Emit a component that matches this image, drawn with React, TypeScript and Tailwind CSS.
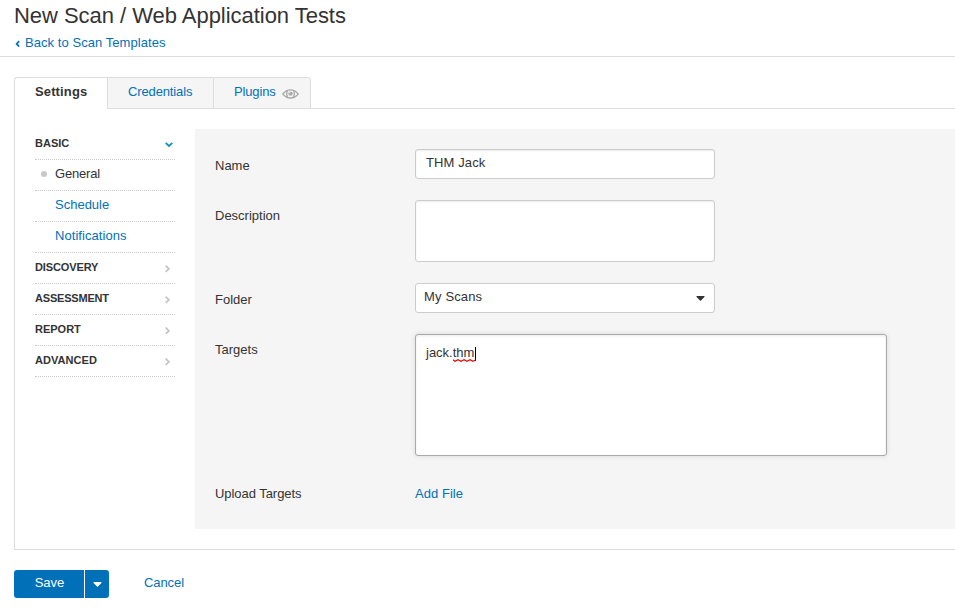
import type { ReactNode } from "react";

function Chevron({ open }: { open?: boolean }) {
  return open ? (
    <svg className="mt-[6px] mr-px h-2 w-2.5" viewBox="0 0 10 8" fill="none">
      <path d="M1.7 1.9 L5 5 L8.3 1.9" stroke="#0e94b0" strokeWidth="1.8" />
    </svg>
  ) : (
    <svg className="mt-[6px] mr-[5px] h-2 w-[5px]" viewBox="0 0 5 8" fill="none">
      <path d="M0.7 0.7 L3.9 3.8 L0.7 6.9" stroke="#c4c4c4" strokeWidth="1.7" />
    </svg>
  );
}

function Section({ label, open, tracking = "" }: { label: string; open?: boolean; tracking?: string }) {
  return (
    <li className="flex h-[31px] items-start justify-between border-b border-dotted border-[#ccc] pt-[6px]">
      <span className={`text-[11px] leading-4 font-bold ${tracking}`}>{label}</span>
      <Chevron open={open} />
    </li>
  );
}

function Item({ label, active, tracking = "" }: { label: string; active?: boolean; tracking?: string }) {
  return (
    <li className="flex h-[31px] items-start border-b border-dotted border-[#ccc] pt-[5px]">
      <span className={active ? "mt-[6px] mr-2 ml-1.5 size-1.5 rounded-full bg-[#c8c8c8]" : "mr-2 ml-1.5 w-1.5"} />
      <span className={`leading-[18px] ${active ? "" : "text-[#0071b9]"} ${tracking}`}>{label}</span>
    </li>
  );
}

function Field({ label, pad = "pt-2", tracking = "", children }: { label: string; pad?: string; tracking?: string; children: ReactNode }) {
  return (
    <div className="flex items-start">
      <label className={`w-[200px] shrink-0 leading-[18px] ${pad} ${tracking}`}>{label}</label>
      {children}
    </div>
  );
}

function Caret() {
  return (
    <svg className="h-[5px] w-[9px]" viewBox="0 0 9 5" fill="currentColor">
      <path d="M0.8 0 H8.2 Q9 0.3 8.4 1 L5 4.6 Q4.5 5 4 4.6 L0.6 1 Q0 0.3 0.8 0 Z" />
    </svg>
  );
}

export default function App() {
  return (
    <div className="h-[616px] w-[955px] overflow-hidden bg-white font-['Liberation_Sans',sans-serif] text-[13px] text-[#333]">
      <header className="h-[57px] border-b border-[#ddd] pl-3.5">
        <h1 className="pt-px text-[22px] leading-[30px] tracking-[-0.035px] text-[#333]">New Scan / Web Application Tests</h1>
        <a className="mt-[3px] flex items-start leading-[18px] text-[#0071b9]">
          <svg className="mt-[6px] mr-[5px] ml-px h-[7px] w-[5px]" viewBox="0 0 5 7" fill="none">
            <path d="M4.2 1.2 L1.6 3.9 L4.2 6.6" stroke="#0071b9" strokeWidth="1.7" />
          </svg>
          <span className="tracking-[0.06px]">Back to Scan Templates</span>
        </a>
      </header>

      <main className="mt-5 ml-3.5">
        <nav className="flex h-8">
          <a className="h-8 w-[93px] rounded-tl-[3px] border-t border-l border-[#ddd] pt-[5px] pl-5 leading-[18px] font-bold tracking-[0.13px]">Settings</a>
          <a className="h-8 w-[106px] border border-r-0 border-[#ddd] bg-[#f5f5f5] pt-[5px] pl-5 leading-[18px] tracking-[-0.13px] text-[#0071b9]">Credentials</a>
          <a className="flex h-8 w-[98px] items-start rounded-tr-[3px] border border-[#ddd] bg-[#f5f5f5] pt-[5px] pl-5 leading-[18px] text-[#0071b9]">
            <span className="w-12 tracking-[-0.14px]">Plugins</span>
            <svg className="mt-[6px] h-[10px] w-[17px]" viewBox="0 0 17 10" fill="none">
              <path d="M0.8 5 Q4 0.9 8.5 0.9 T16.2 5 Q13 9 8.5 9 T0.8 5 Z" stroke="#aaa" strokeWidth="1.3" />
              <path d="M5.2 1.8 Q3.9 5 5.6 8 M11.8 1.8 Q13.1 5 11.4 8" stroke="#aaa" strokeWidth="1.4" />
              <circle cx="8.5" cy="4.6" r="2.2" fill="#aaa" />
              <path d="M7.1 4.5 Q7.1 3 8.5 2.9" stroke="#f5f5f5" strokeWidth="0.8" />
            </svg>
          </a>
          <span className="flex-1 border-b border-[#ddd]" />
        </nav>

        <section className="flex h-[441px] border-b border-l border-[#ddd] pt-5 pl-5">
          <ul className="w-[140px] shrink-0">
            <Section label="BASIC" open />
            <Item label="General" active tracking="tracking-[-0.2px]" />
            <Item label="Schedule" />
            <Item label="Notifications" tracking="tracking-[0.06px]" />
            <Section label="DISCOVERY" tracking="tracking-[-0.12px]" />
            <Section label="ASSESSMENT" tracking="tracking-[-0.2px]" />
            <Section label="REPORT" />
            <Section label="ADVANCED" tracking="tracking-[0.05px]" />
          </ul>

          <form className="ml-5 flex h-[400px] flex-1 flex-col gap-[21px] bg-[#f5f5f5] pt-5 pl-5">
            <Field label="Name">
              <div className="h-[30px] w-[300px] rounded-[3px] border border-[#ccc] bg-white pt-1 pl-2.5 leading-[18px] tracking-[0.12px] shadow-[inset_0_1px_2px_rgba(0,0,0,0.08)]">THM Jack</div>
            </Field>
            <Field label="Description" pad="pt-[7px]">
              <div className="h-[62px] w-[300px] rounded-[3px] border border-[#ccc] bg-white shadow-[inset_0_1px_2px_rgba(0,0,0,0.08)]" />
            </Field>
            <Field label="Folder">
              <div className="flex h-[30px] w-[300px] items-start justify-between rounded-[3px] border border-[#ccc] bg-white pt-1 pr-[9px] pl-2 leading-[18px]">
                <span className="tracking-[0.15px]">My Scans</span>
                <span className="mt-2 leading-none"><Caret /></span>
              </div>
            </Field>
            <Field label="Targets" pad="pt-[7px]">
              <div className="flex h-[122px] w-[472px] items-start rounded-[3px] border border-[#aaa] bg-white pt-[9px] pl-2.5 leading-[18px] shadow-[0_0_5px_rgba(0,0,0,0.12),inset_0_1px_3px_rgba(0,0,0,0.08)]">
                <span>jack.</span>
                <span className="relative w-[22px]">
                  thm
                  <svg className="absolute top-[15px] left-0 h-[3px] w-[23px]" viewBox="0 0 23 3" fill="none">
                    <path d="M0 0.7 L2 2.3 L5 0.7 L8 2.3 L11 0.7 L14 2.3 L17 0.7 L20 2.3 L23 0.7" stroke="#e80000" strokeWidth="1.1" />
                  </svg>
                </span>
                <span className="mt-[3px] h-3.5 w-px bg-black" />
              </div>
            </Field>
            <Field label="Upload Targets" tracking="tracking-[-0.05px]">
              <a className="pt-2 leading-[18px] tracking-[0.05px] text-[#0071b9]">Add File</a>
            </Field>
          </form>
        </section>

        <footer className="mt-5 flex h-7 items-start">
          <button type="button" className="h-7 w-[70px] rounded-l-[3px] bg-[#0071b9] pb-[3px] pl-px leading-[18px] text-white">Save</button>
          <button type="button" className="ml-px flex h-7 w-6 items-start justify-center rounded-r-[3px] bg-[#0071b9] pt-3 text-white">
            <Caret />
          </button>
          <a className="ml-[35px] pt-1 leading-[18px] tracking-[-0.08px] text-[#0071b9]">Cancel</a>
        </footer>
      </main>
    </div>
  );
}
